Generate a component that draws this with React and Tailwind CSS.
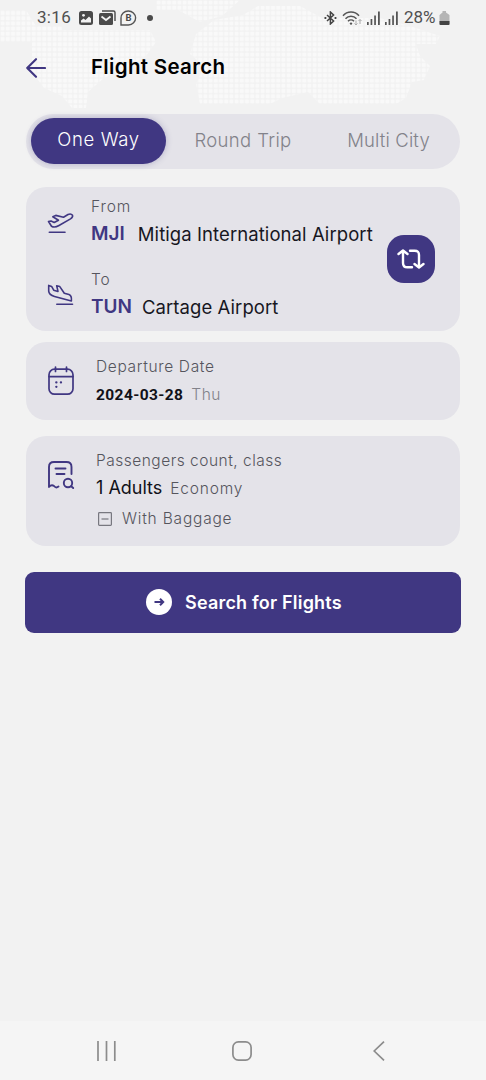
import React from "react";

const MapDots = () => {
  return (
    <svg className="absolute top-0 left-0" width="486" height="112" viewBox="0 0 486 112">
      <defs>
        <pattern id="dots" width="5.2" height="5.2" patternUnits="userSpaceOnUse">
          <rect x="0.6" y="0.6" width="4" height="4" rx="1.2" fill="#f9f9f9" />
        </pattern>
      </defs>
      <g fill="url(#dots)">
        <path d="M0 10H26L36 26H62V30H150L156 42L146 56L126 68L104 78L88 92L86 108H72L62 96L44 88L32 72V42H0Z" />
        <path d="M156 0H240L222 16L200 22L178 10H156Z" />
        <path d="M196 34L214 20L243 15L258 6H300L322 18H380L410 26L440 36L436 44H416L420 56L430 66L424 80L412 82L406 98L396 104H320L308 92L282 98L270 104H200L196 84L204 66L190 54Z" />
      </g>
    </svg>
  );
};

const Signal = () => {
  return (
    <svg width="13" height="14" viewBox="0 0 13 14" fill="#555">
      <path d="M0 11h1.7v3H0zM3.6 8h1.7v6H3.6zM7.2 4.5h1.7V14H7.2zM11 0.5h1.8V14H11z" />
    </svg>
  );
};

const StatusBar = () => {
  return (
    <div className="h-9 pl-[37px] pr-[36px] flex items-center justify-between font-['Roboto',sans-serif] text-[17px] text-[#505050]">
      <div className="flex items-center">
        <span className="w-[42px] tracking-[0.3px]">3:16</span>
        <svg width="14" height="14" viewBox="0 0 14 14">
          <rect width="14" height="14" rx="2.5" fill="#4a4a4a" />
          <circle cx="4.5" cy="4.3" r="1.4" fill="#f2f2f2" />
          <path d="M2 11.5V9.5L4.5 7.5L6.5 9L10 5.5L12 7.5V11.5Z" fill="#f2f2f2" />
        </svg>
        <svg className="ml-[6px] mb-px" width="17" height="15" viewBox="0 0 17 15">
          <path d="M3 1H14.5Q16 1 16 2.5V11" fill="none" stroke="#4a4a4a" strokeWidth="1.4" />
          <rect y="3" width="14" height="12" rx="1.5" fill="#4a4a4a" />
          <path d="M2.5 6.5L7 10L11.5 6.5" fill="none" stroke="#f2f2f2" strokeWidth="1.8" />
        </svg>
        <svg className="ml-[4px]" width="17" height="16" viewBox="0 0 17 16">
          <path d="M1 15V8A7.3 7 0 1 1 8.5 15Z" fill="none" stroke="#555" strokeWidth="1.4" />
          <text x="8.6" y="11.4" fontSize="9.5" fontWeight="700" textAnchor="middle" fill="#4a4a4a">B</text>
        </svg>
        <span className="ml-[10px] size-[6px] rounded-full bg-[#4a4a4a]" />
      </div>
      <div className="flex items-center">
        <svg width="13" height="14" viewBox="0 0 13 14" fill="none" stroke="#444" strokeWidth="1.5">
          <path d="M3 4L9.6 10L6.4 13V1L9.6 4L3 10" />
          <path d="M0.5 7h1.8M10.6 7h1.8" strokeWidth="2" />
        </svg>
        <svg className="ml-[5px]" width="21" height="15" viewBox="0 0 21 15" fill="none" stroke="#555" strokeWidth="1.5">
          <path d="M1 4.8A10.5 10.5 0 0 1 17 4.8M3.5 7.7A7.5 7.5 0 0 1 14.5 7.7M6 10.2A4.3 4.3 0 0 1 12 10.2" />
          <circle cx="9" cy="12.6" r="1.2" fill="#555" stroke="none" />
          <path d="M14 9.5V14M12.5 12.5L14 14L15.5 12.5M18 13V8.5M16.5 10L18 8.5L19.5 10" stroke="#aaa" strokeWidth="1" />
        </svg>
        <span className="ml-[4px]"><Signal /></span>
        <span className="ml-[5px]"><Signal /></span>
        <span className="ml-[6px] w-[34px] tracking-[-0.1px]">28%</span>
        <svg className="ml-px" width="11" height="14" viewBox="0 0 11 14">
          <path d="M3.5 0H7V1.5L10.5 4V13Q10.5 14 9.5 14H1.5Q0.5 14 0.5 13V4L3.5 1.5Z" fill="#b5b5b5" />
          <path d="M0.5 10H10.5V13Q10.5 14 9.5 14H1.5Q0.5 14 0.5 13Z" fill="#444" />
        </svg>
      </div>
    </div>
  );
};

const DepartIcon = () => {
  return (
    <svg width="28" height="24" viewBox="0 0 28 24" fill="none" stroke="#403782" strokeWidth="1.6" strokeLinecap="round" strokeLinejoin="round">
      <path d="M1.5 9.5L4 9L7.2 10.5L11.5 8.2L5.8 4.8L8.8 3.4L16.5 5.2L21 2.5Q24 1.2 25.5 3.2Q26.2 5 23.5 6.9L12 13.5Q7.5 16 4.5 14.2Z" />
      <path d="M2.3 20.3H18" />
    </svg>
  );
};

const ArriveIcon = () => {
  return (
    <svg width="28" height="24" viewBox="0 0 28 24" fill="none" stroke="#403782" strokeWidth="1.6" strokeLinecap="round" strokeLinejoin="round">
      <path d="M1.7 1.4L4.6 2.4L6.7 6.2L11 7.4L9.7 1.8L12.8 2.6L17.3 9.2L22 10.5Q25 11.7 24.4 17L7.5 12.4Q2 10.9 1.7 7.1Z" />
      <path d="M9.8 20.3H25.5" />
    </svg>
  );
};

const CalendarIcon = () => {
  return (
    <svg width="26" height="30" viewBox="0 0 26 30" fill="none" stroke="#403782" strokeWidth="1.7" strokeLinecap="round">
      <rect x="1" y="3.2" width="24" height="25" rx="5.5" />
      <path d="M1 10.6H25M7.5 1V5.5M18.5 1V5.5" />
      <path d="M8.3 16.4h.1M12.9 16.4h.1M8.3 20.8h.1" strokeWidth="2.3" />
    </svg>
  );
};

const PassengersIcon = () => {
  return (
    <svg width="27" height="29" viewBox="0 0 27 29" fill="none" stroke="#403782" strokeWidth="1.9" strokeLinecap="round" strokeLinejoin="round">
      <path d="M23.5 13V6Q23.5 1 18.5 1H6Q1 1 1 6V26Q3.5 23 6 25Q8 27.5 10.5 25.5" />
      <path d="M7.5 7.5H17.5M8.5 13H16.5" />
      <circle cx="20" cy="22" r="4.2" />
      <path d="M23.2 25.2L25.2 27" />
    </svg>
  );
};

const SwapIcon = () => {
  return (
    <svg width="28" height="20" viewBox="0 0 28 20" fill="none" stroke="#fff" strokeWidth="2.4" strokeLinecap="round" strokeLinejoin="round">
      <path d="M1.5 5L6 1.5L10.5 5M6 2V14Q6 18.3 10.3 18.3H15" />
      <path d="M26.5 15L22 18.5L17.5 15M22 18V6Q22 1.7 17.7 1.7H13" />
    </svg>
  );
};

const Airport = ({ label, code, name, gap }) => {
  return (
    <div>
      <p className="h-[26px] pt-px leading-[26px] text-[15.5px] font-light tracking-[0.9px] text-[#55555d]">{label}</p>
      <p className="h-[30px] leading-[30px] flex items-center">
        <span className={"text-[19px] font-semibold text-[#403782] " + gap}>{code}</span>
        <span className="text-[18.5px] font-normal tracking-[0.08px] whitespace-nowrap text-[#17171f]">{name}</span>
      </p>
    </div>
  );
};

const App = () => {
  return (
    <div className="relative w-[486px] h-[1080px] overflow-hidden bg-[#f2f2f2] flex flex-col font-['Inter',sans-serif]">
      <MapDots />
      <div className="relative flex-1">
        <StatusBar />
        <div className="h-[62px] pl-[26px] flex items-center">
          <svg className="mt-px" width="20" height="20" viewBox="0 0 20 20" fill="none" stroke="#403782" strokeWidth="2.1" strokeLinecap="round" strokeLinejoin="round">
            <path d="M19 10H1.2M10 1.2L1.2 10L10 18.8" />
          </svg>
          <h1 className="ml-[45px] text-[20.5px] font-semibold tracking-[0.32px] text-black">Flight Search</h1>
        </div>

        <div className="mt-[16px] mx-[26px] h-[55px] rounded-full bg-[#e4e3e9] flex items-center pl-[5px] text-[18.5px] font-light text-[#82828a]">
          <div className="shrink-0 w-[135px] h-[46px] mr-[5px] mb-px pb-[2px] rounded-full bg-[#403782] tracking-[0.65px] text-white flex items-center justify-center shadow-[0_0_6px_rgba(64,55,130,0.3)]">One Way</div>
          <div className="shrink-0 w-[144px] pb-[2px] tracking-[0.35px] text-center">Round Trip</div>
          <div className="shrink-0 w-[147px] pb-[2px] tracking-[0.15px] text-center">Multi City</div>
        </div>

        <div className="mt-[18px] mx-[26px] h-[144px] rounded-[20px] bg-[#e4e3e9] flex">
          <div className="w-[65px] pl-[21px] pt-[25px] flex flex-col gap-[48px]">
            <DepartIcon />
            <ArriveIcon />
          </div>
          <div className="w-[296px] pt-[6px] flex flex-col gap-[17px]">
            <Airport label="From" code="MJI" name="Mitiga International Airport" gap="mr-[13px]" />
            <Airport label="To" code="TUN" name="Cartage Airport" gap="mr-[10px]" />
          </div>
          <button className="mt-[48px] size-[48px] rounded-[17px] bg-[#403782] flex items-center justify-center">
            <SwapIcon />
          </button>
        </div>

        <div className="mt-[11px] mx-[26px] h-[78px] rounded-[20px] bg-[#e4e3e9] flex">
          <div className="w-[70px] pl-[22px] pt-[24px]">
            <CalendarIcon />
          </div>
          <div className="pt-[11px]">
            <p className="h-[28px] leading-[28px] text-[15.5px] font-light tracking-[0.65px] text-[#55555d]">Departure Date</p>
            <p className="h-[28px] leading-[28px] flex">
              <span className="font-['Roboto',sans-serif] text-[15.5px] font-bold tracking-[0.4px] text-[#111118]">2024-03-28</span>
              <span className="ml-[8px] text-[15.5px] font-light tracking-[0.5px] text-[#82828a]">Thu</span>
            </p>
          </div>
        </div>

        <div className="mt-[16px] mx-[26px] h-[110px] rounded-[20px] bg-[#e4e3e9] flex">
          <div className="w-[70px] pl-[22px] pt-[25px]">
            <PassengersIcon />
          </div>
          <div className="pt-[11px]">
            <p className="h-[28px] leading-[28px] text-[15.5px] font-light tracking-[0.5px] text-[#55555d]">Passengers count, class</p>
            <p className="h-[28px] leading-[26px] flex">
              <span className="text-[18px] text-[#111118]">1 Adults</span>
              <span className="ml-[8px] text-[15.5px] font-light tracking-[0.8px] text-[#55555d] leading-[28px]">Economy</span>
            </p>
            <div className="h-[32px] flex items-center">
              <svg className="ml-[2px] mb-px" width="14" height="14" viewBox="0 0 14 14" fill="none" stroke="#77777f" strokeWidth="1.2">
                <rect x="0.6" y="0.6" width="12.8" height="12.8" rx="0.8" />
                <path d="M3.5 7H10.5" />
              </svg>
              <span className="ml-[10px] text-[15.5px] font-light tracking-[0.8px] text-[#55555d]">With Baggage</span>
            </div>
          </div>
        </div>

        <button className="mt-[26px] mx-[25px] w-[436px] h-[61px] rounded-[9px] bg-[#403782] flex items-center pl-[121px] text-white">
          <svg className="mb-px" width="26" height="26" viewBox="0 0 26 26">
            <circle cx="13" cy="13" r="13" fill="#fff" />
            <path d="M8.5 13H17M14 9.8L17.2 13L14 16.2" fill="none" stroke="#403782" strokeWidth="2" />
          </svg>
          <span className="ml-[13px] pb-px text-[18px] font-semibold tracking-[0.2px]">Search for Flights</span>
        </button>
      </div>

      <div className="h-[59px] bg-[#f5f5f5] flex items-center pl-[97px]">
        <svg width="20" height="20" viewBox="0 0 20 20" stroke="#8c8c8c" strokeWidth="1.7">
          <path d="M1 0V20M9.5 0V20M17.8 0V20" />
        </svg>
        <svg className="ml-[115px]" width="20" height="20" viewBox="0 0 20 20" fill="none" stroke="#8c8c8c" strokeWidth="1.7">
          <rect x="0.9" y="0.9" width="18.2" height="18.2" rx="5.5" />
        </svg>
        <svg className="ml-[121px]" width="12" height="20" viewBox="0 0 12 20" fill="none" stroke="#8c8c8c" strokeWidth="1.7">
          <path d="M11 0.7L1.2 10L11 19.3" />
        </svg>
      </div>
    </div>
  );
};

export default App;
